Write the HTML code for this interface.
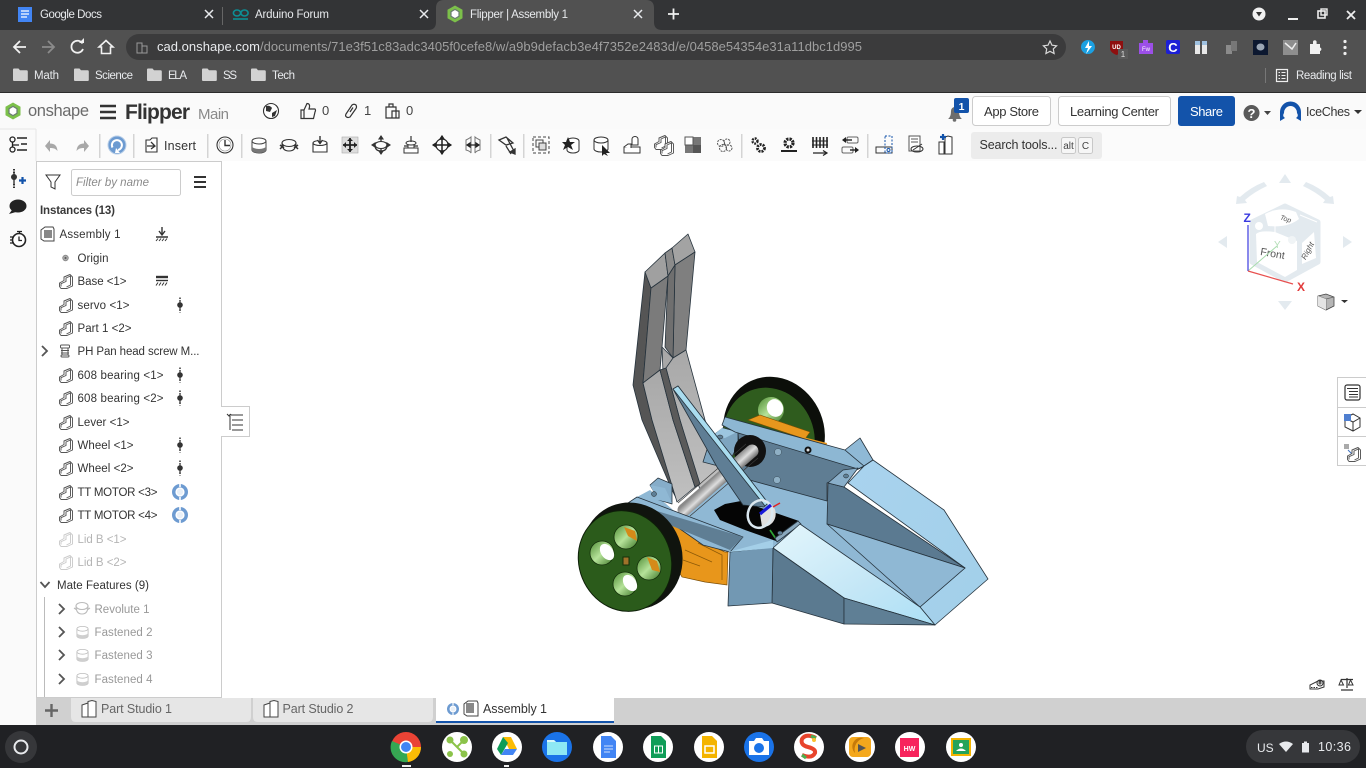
<!DOCTYPE html>
<html lang="en"><head><meta charset="utf-8"><title>Flipper | Assembly 1</title>
<style>
html,body{margin:0;padding:0;width:1366px;height:768px;overflow:hidden;background:#fff}
svg{display:block;font-family:"Liberation Sans",sans-serif}
.tab{font-size:11.5px;fill:#e8eaed}.bm{font-size:11.5px;fill:#e8eaed}
.tr{font-size:11.5px;fill:#333}.dim{font-size:11.5px;fill:#b5b5b5}.mf{font-size:11.5px;fill:#999}
.ic{fill:none;stroke:#333;stroke-width:1.1}.ed{stroke:#26333d;stroke-width:.8;stroke-linejoin:round}
.bt{font-size:13px;fill:#333;text-anchor:middle}
</style></head><body>
<svg width="1366" height="768" viewBox="0 0 1366 768" xmlns="http://www.w3.org/2000/svg">
<defs>
<linearGradient id="shaft" gradientUnits="userSpaceOnUse" x1="715.6" y1="475.2" x2="724.4" y2="484.8"><stop offset="0" stop-color="#8a8a8a"/><stop offset=".5" stop-color="#dedede"/><stop offset="1" stop-color="#707070"/></linearGradient>
<linearGradient id="wt" x1="0" y1="0" x2="1" y2="1"><stop offset="0" stop-color="#e3f6fc"/><stop offset=".6" stop-color="#c3e6f6"/><stop offset="1" stop-color="#ace0f6"/></linearGradient>
<linearGradient id="wr" x1="0" y1="0" x2="1" y2=".6"><stop offset="0" stop-color="#a9d3ee"/><stop offset="1" stop-color="#a3d0ea"/></linearGradient>
<linearGradient id="fl" x1="0" y1="0" x2="0" y2="1"><stop offset="0" stop-color="#a8a8a8"/><stop offset="1" stop-color="#c0c0c0"/></linearGradient>
<linearGradient id="hole" x1="0" y1="0" x2="1" y2="1"><stop offset="0" stop-color="#4c8a32"/><stop offset=".5" stop-color="#b6e39a"/><stop offset="1" stop-color="#3c7526"/></linearGradient>
<g id="part"><path d="M.5 9L5 6.500V3L11 .5L13.500 3V12L8 14.500H2L.5 12.500Z" fill="#fff" stroke="#555" stroke-width=".95" stroke-linejoin="round"/><path d="M2 12.500V9.700L7 7.500V4L11.500 2V11L7.500 13" fill="none" stroke="#555" stroke-width=".95"/></g>
<g id="partd" opacity=".3"><use href="#part"/></g>
<g id="dof"><path d="M0 -7.500V-4.500M0 4.500V7.500" stroke="#333" stroke-width="1.500" stroke-dasharray="1.500 1"/><path d="M0 -5V5" stroke="#333" stroke-width="1.200"/><circle r="2.800" fill="#333"/></g>
<g id="rev"><circle r="8" fill="#6d9bd1"/><circle r="4.600" fill="#fff"/><circle r="3.200" fill="#6d9bd1" opacity=".15"/><path d="M0 -8V-5M0 5V8" stroke="#fff" stroke-width="1.600"/></g>
<path id="chev" d="M-3 -5L2 0L-3 5" fill="none" stroke="#555" stroke-width="1.800"/>
<g id="cyl"><path d="M-7 -4V5A7 3 0 0 0 7 5V-4" fill="#fff" stroke="#444" stroke-width="1"/><path d="M-7 1A7 3 0 0 0 7 1V5A7 3 0 0 1 -7 5Z" fill="#777"/><ellipse cy="-4" rx="7" ry="3" fill="#fff" stroke="#444"/></g>
<g id="folder"><path d="M0 1.500A1 1 0 0 1 1 .5H5.500L7 2.200H13.600A1.200 1.200 0 0 1 14.800 3.400V12A1 1 0 0 1 13.800 13H1A1 1 0 0 1 0 12Z" fill="#d2d2d2"/></g>
<g id="x"><path d="M-4 -4L4 4M4 -4L-4 4" stroke="#e8eaed" stroke-width="1.500"/></g>
<g id="sdisc"><circle r="15" fill="#fff"/></g>
<g id="hex"><path d="M0 -8.500L7.500 -4.200V4.200L0 8.500L-7.500 4.200V-4.200Z" fill="#7cc04a"/><path d="M0 -4.600L4 -2.300V2.300L0 4.600L-4 2.300V-2.300Z" fill="#fff" stroke="#6a7c72" stroke-width="1.200"/></g>
</defs>

<!-- browser chrome -->
<rect width="1366" height="31" fill="#333436"/>
<rect y="30" width="1366" height="62" fill="#515151"/>
<rect y="92" width="1366" height="1" fill="#2b2b2b"/>
<path d="M428 30Q436 30 436 22V8Q436 0 444 0H646Q654 0 654 8V22Q654 30 662 30Z" fill="#515151"/>
<path d="M18 7H32V22H18Z" fill="#4285f4"/><path d="M21 11H29M21 14H29M21 17H27" stroke="#fff" stroke-width="1.200"/>
<text class="tab" x="40" y="18" textLength="62">Google Docs</text><use href="#x" x="209" y="14"/>
<rect x="222" y="7" width="1" height="18" fill="#666"/>
<g fill="none" stroke="#0d8e94" stroke-width="1.600"><ellipse cx="237" cy="13" rx="3.600" ry="3"/><ellipse cx="244.500" cy="13" rx="3.600" ry="3"/></g><path d="M233 19H248" stroke="#0d8e94" stroke-width="1.600"/>
<text class="tab" x="255" y="18" textLength="74">Arduino Forum</text><use href="#x" x="424" y="14"/>
<use href="#hex" x="455" y="14"/>
<text class="tab" x="470" y="18" textLength="98">Flipper | Assembly 1</text><use href="#x" x="638" y="14"/>
<path d="M668 14H679M673.500 8.500V19.500" stroke="#f1f1f1" stroke-width="1.800"/>
<circle cx="1259" cy="14" r="6.500" fill="#f1f1f1"/><path d="M1256 12H1262L1259 16.500Z" fill="#333"/>
<path d="M1288 19H1298" stroke="#eee" stroke-width="2"/>
<rect x="1318" y="11" width="7" height="7" fill="none" stroke="#eee" stroke-width="1.600"/><rect x="1321" y="9" width="6" height="6" fill="none" stroke="#eee" stroke-width="1.400"/>
<path d="M1347 11L1355 19M1355 11L1347 19" stroke="#eee" stroke-width="1.800"/>
<!-- nav -->
<path d="M26 47H15M20 41L14 47L20 53" fill="none" stroke="#f1f1f1" stroke-width="1.800"/>
<path d="M42 47H53M48 41L54 47L48 53" fill="none" stroke="#8b8b8b" stroke-width="1.800"/>
<path d="M82.500 43.500A6 6 0 1 0 83 49" fill="none" stroke="#f1f1f1" stroke-width="1.800"/><path d="M79 43H84V38Z" fill="#f1f1f1"/>
<path d="M99 47L106 40.500L113 47H110.500V53.500H101.500V47Z" fill="none" stroke="#f1f1f1" stroke-width="1.600"/>
<rect x="126" y="34" width="940" height="26" rx="13" fill="#3b3b3c"/>
<path d="M137 43H142V53H137ZM142 46H147V53H142Z" fill="none" stroke="#9a9a9a" stroke-width="1"/>
<text x="157" y="51" font-size="13" fill="#9f9f9f" textLength="705"><tspan fill="#e8eaed">cad.onshape.com</tspan>/documents/71e3f51c83adc3405f0cefe8/w/a9b9defacb3e4f7352e2483d/e/0458e54354e31a11dbc1d995</text>
<path d="M1050 41L1052 45.200L1056.600 45.800L1053.300 49L1054.100 53.500L1050 51.300L1045.900 53.500L1046.700 49L1043.400 45.800L1048 45.200Z" fill="none" stroke="#d8d8d8" stroke-width="1.200"/>
<!-- extensions -->
<path d="M1088 40A7 7 0 1 1 1087.900 40Z" fill="#1ba0e2"/><path d="M1089 41L1085 48H1088L1086 54L1092 46H1089Z" fill="#fff"/>
<path d="M1110 41H1123V49Q1122 53 1116.500 55Q1111 53 1110 49Z" fill="#8e0f0f"/><text x="1116.500" y="49" font-size="6" font-weight="bold" fill="#fff" text-anchor="middle">UD</text>
<rect x="1118" y="49" width="10" height="10" fill="#5a5a5a"/><text x="1123" y="57" font-size="8" fill="#ddd" text-anchor="middle">1</text>
<path d="M1139 43H1143V40H1148V43H1153V54H1139Z" fill="#9c4fe8"/><text x="1146" y="51" font-size="6" fill="#fff" text-anchor="middle">Fw</text>
<rect x="1166" y="40" width="14" height="14" rx="2" fill="#1c1fd6"/><text x="1173" y="52" font-size="13" font-weight="bold" fill="#fff" text-anchor="middle">C</text>
<path d="M1195 41H1200V54H1195ZM1202 41H1207V54H1202Z" fill="#e8e8e8"/><path d="M1195 41H1200V45H1195ZM1202 41H1207V45H1202Z" fill="#9fc1e0"/>
<path d="M1226 45H1232V54H1226Z" fill="#8b8b8b"/><path d="M1231 41H1237V51H1231Z" fill="#777"/>
<rect x="1253" y="40" width="15" height="15" fill="#0c1830"/><ellipse cx="1260.500" cy="47" rx="4" ry="3.500" fill="#9aa6b5"/>
<rect x="1283" y="40" width="15" height="15" fill="#8e8e8e"/><path d="M1285 43L1292 49L1296 43" fill="none" stroke="#eee" stroke-width="1.500"/>
<path d="M1310 44H1313V42A1.800 1.800 0 0 1 1316.600 42V44H1320V47.500A1.800 1.800 0 0 1 1320 51V54H1310Z" fill="#f1f1f1"/>
<circle cx="1345" cy="41.500" r="1.600" fill="#eee"/><circle cx="1345" cy="47.500" r="1.600" fill="#eee"/><circle cx="1345" cy="53.500" r="1.600" fill="#eee"/>
<!-- bookmarks -->
<use href="#folder" x="13" y="68"/><text class="bm" x="34" y="79" textLength="25">Math</text>
<use href="#folder" x="74" y="68"/><text class="bm" x="95" y="79" textLength="38">Science</text>
<use href="#folder" x="147" y="68"/><text class="bm" x="168" y="79" textLength="19">ELA</text>
<use href="#folder" x="202" y="68"/><text class="bm" x="223" y="79" textLength="14">SS</text>
<use href="#folder" x="251" y="68"/><text class="bm" x="272" y="79" textLength="23">Tech</text>
<rect x="1265" y="68" width="1" height="15" fill="#777"/>
<rect x="1276.500" y="69.500" width="11" height="12" fill="none" stroke="#eee" stroke-width="1.200"/><path d="M1278.500 72.500H1280M1281.500 72.500H1285.500M1278.500 75.500H1280M1281.500 75.500H1285.500M1278.500 78.500H1280M1281.500 78.500H1285.500" stroke="#eee"/>
<text class="bm" x="1296" y="79" textLength="56">Reading list</text>

<!-- onshape header -->
<rect y="93" width="1366" height="68" fill="#fafafa"/>
<rect y="129" width="1366" height="32" fill="#fbfbfb"/>
<use href="#hex" x="13" y="111"/>
<text x="28" y="116" font-size="16.500" fill="#6b6b6b" textLength="61">onshape</text>
<path d="M100 106H116M100 112H116M100 118H116" stroke="#333" stroke-width="2.600"/>
<text x="125" y="119" font-size="21" font-weight="bold" fill="#333" textLength="65">Flipper</text>
<text x="198" y="119" font-size="15" fill="#8a8a8a" textLength="31">Main</text>
<circle cx="271" cy="111" r="7.500" fill="#fff" stroke="#333" stroke-width="1.100"/><path d="M266 106Q270 105 272 108L270 112L266 111ZM272 113L277 110L275 116L272 117Z" fill="#333"/>
<path d="M301 110H304V118.500H301ZM304 110L307 103.500Q310 103.500 309.500 107L309 109H315Q316 110 315 112L313.500 118.500H304" fill="none" stroke="#333" stroke-width="1.200"/>
<text x="322" y="115" font-size="13" fill="#444">0</text>
<path d="M346 114L352 105Q354 103.500 356 105Q357 107 356 108.500L350 117Q348 118 346.500 117Q345 116 346 114ZM350 112L353 107.500" fill="none" stroke="#333" stroke-width="1.200"/>
<text x="364" y="115" font-size="13" fill="#444">1</text>
<path d="M386 107H396V118H386ZM389 107V104H393V107M392 111V118H399V111Z" fill="none" stroke="#333" stroke-width="1.200"/>
<text x="406" y="115" font-size="13" fill="#444">0</text>
<path d="M948 119Q951 117 951 111A4 4 0 0 1 959 111Q959 117 962 119Z" fill="#6d6d6d"/><circle cx="954.500" cy="120" r="1.800" fill="#6d6d6d"/>
<rect x="954" y="98" width="15" height="15" rx="2" fill="#1353aa"/><text x="961.500" y="110" font-size="10.500" font-weight="bold" fill="#fff" text-anchor="middle">1</text>
<rect x="972.500" y="96.500" width="78" height="29" rx="3" fill="#fff" stroke="#ccc"/><text class="bt" x="1011.500" y="116" textLength="55">App Store</text>
<rect x="1058.500" y="96.500" width="112" height="29" rx="3" fill="#fff" stroke="#ccc"/><text class="bt" x="1114.500" y="116" textLength="89">Learning Center</text>
<rect x="1178" y="96" width="57" height="30" rx="3" fill="#1353aa"/><text x="1206.500" y="116" font-size="13" fill="#fff" text-anchor="middle" textLength="33">Share</text>
<circle cx="1251.500" cy="113" r="8" fill="#5a5a5a"/><text x="1251.500" y="118" font-size="13" font-weight="bold" fill="#fff" text-anchor="middle">?</text>
<path d="M1264 111H1271L1267.500 115Z" fill="#444"/>
<path d="M1280 121V112A10.500 10.500 0 0 1 1301 112V121L1296 118Q1299 116 1297 113A6.500 7 0 0 0 1284 113Q1282 116 1285 118Z" fill="#1353aa"/>
<text x="1306" y="116" font-size="12.500" fill="#333" textLength="44">IceChes</text>
<path d="M1354 110H1362L1358 114Z" fill="#333"/>

<!-- toolbar -->
<g fill="#d4d4d4"><rect x="99" y="134" width="1.500" height="24"/><rect x="133" y="134" width="1.500" height="24"/><rect x="207" y="134" width="1.500" height="24"/><rect x="241" y="134" width="1.500" height="24"/><rect x="490" y="134" width="1.500" height="24"/><rect x="523" y="134" width="1.500" height="24"/><rect x="741" y="134" width="1.500" height="24"/><rect x="867" y="134" width="1.500" height="24"/></g>
<path d="M45 146L50 140V143.500Q57 143.500 57.500 151Q55 147.500 50 148V152Z" fill="#a8a8a8"/>
<path d="M89 146L84 140V143.500Q77 143.500 76.500 151Q79 147.500 84 148V152Z" fill="#a8a8a8"/>
<circle cx="117" cy="145" r="9" fill="#6d9bd1" stroke="#b9cfe8"/><path d="M112.500 147.500A5 5 0 1 1 118 150" fill="none" stroke="#fff" stroke-width="2"/><path d="M116 148L120 153L115 153Z" fill="#fff"/>
<path d="M146 140H150L152 138H157V152H146Z" fill="#fff" stroke="#333" stroke-width="1.100"/><path d="M151 142L155 146L151 149M147 146H155" fill="none" stroke="#333" stroke-width="1.300"/>
<text x="164" y="150" font-size="12.500" fill="#333" textLength="32">Insert</text>
<circle cx="225" cy="145" r="8" fill="#fff" stroke="#333" stroke-width="1.100"/><circle cx="225" cy="145" r="6" fill="none" stroke="#888" stroke-width=".6"/><path d="M225 140V145.500H230" fill="none" stroke="#333" stroke-width="1.400"/>
<use href="#cyl" x="259" y="145"/>
<g transform="translate(289 145)" fill="none" stroke="#333" stroke-width="1.100"><ellipse cy="-2" rx="7" ry="3.500"/><path d="M-7 -2Q-7 6 0 6Q7 6 7 -2"/><path d="M-9 0L-5 3M-9 4L-5 0M9 0L5 3M9 4L5 0" stroke-width="1.500"/></g>
<g transform="translate(320 146)" fill="#fff" stroke="#333" stroke-width="1.100"><path d="M-7 -3V6H7V-3"/><ellipse cy="-3" rx="7" ry="2.500"/><path d="M0 -10V-2M-2.500 -6L0 -2.500L2.500 -6" stroke-width="1.400"/></g>
<g transform="translate(350 145)"><rect x="-8" y="-8" width="16" height="16" fill="#ddd" stroke="#aaa" stroke-width=".6"/><path d="M-7 0H7M0 -7V7" stroke="#222" stroke-width="1.800"/><path d="M-7 0L-4 -3V3ZM7 0L4 -3V3ZM0 -7L-3 -4H3ZM0 7L-3 4H3Z" fill="#222"/></g>
<g transform="translate(381 145)" fill="none" stroke="#333" stroke-width="1.100"><ellipse rx="6" ry="3.500"/><path d="M-6 0Q-6 6 0 6Q6 6 6 0M0 -9V-3M0 3V9" stroke-width="1.300"/><path d="M-9 0L-6 -2V2ZM9 0L6 -2V2ZM0 -9L-2 -6H2ZM0 9L-2 6H2Z" fill="#333"/></g>
<g transform="translate(411 145)" fill="#fff" stroke="#333" stroke-width="1"><path d="M-7 8V3H7V8ZM-3 3V-2H3V3"/><ellipse cy="-2" rx="5" ry="2"/><path d="M0 -9V-3M-7 1H-3M7 1H3" stroke-width="1.200"/></g>
<g transform="translate(442 145)" fill="none" stroke="#222" stroke-width="1.200"><circle r="6"/><path d="M-9 0H9M0 -9V9" stroke-width="1.500"/><path d="M-9 0L-6 -2V2ZM9 0L6 -2V2ZM0 -9L-2 -6H2ZM0 9L-2 6H2Z" fill="#222"/></g>
<g transform="translate(473 145)" fill="none" stroke="#777" stroke-width="1"><path d="M-7 -5Q-3 -7 -2 -8V8Q-3 6 -7 5ZM7 -5Q3 -7 2 -8V8Q3 6 7 5Z"/><path d="M-6 0H6M-6 0L-3 -2V2ZM6 0L3 -2V2Z" stroke="#222" stroke-width="1.200"/></g>
<g transform="translate(507 145)" stroke="#333" stroke-width="1.300" fill="none"><path d="M-8 -5L-1 -8L6 -2L-1 0ZM-1 1L4 9M0 -7L8 8"/><path d="M8 9L3 7L8 4Z" fill="#333"/></g>
<g transform="translate(541 145)" fill="none" stroke="#444"><rect x="-8" y="-8" width="16" height="16" stroke-dasharray="3 2"/><rect x="-5" y="-5" width="7" height="7"/><rect x="-2" y="-2" width="7" height="7" fill="#ddd"/></g>
<g transform="translate(571 145)"><ellipse cx="2" cy="-4" rx="6" ry="3" fill="#fff" stroke="#333"/><path d="M-4 -4V5A6 3 0 0 0 8 5V-4" fill="#fff" stroke="#333"/><path d="M-3 -8L-1 -3L4 -3L0 0L2 5L-3 2L-8 5L-6 0L-9 -3H-5Z" fill="#222"/></g>
<g transform="translate(601 145)"><path d="M-7 -5V4A7 3 0 0 0 7 4V-5" fill="#fff" stroke="#333"/><ellipse cy="-5" rx="7" ry="3" fill="#fff" stroke="#333"/><path d="M1 0L9 8L5 8L7 11L3 9L1 11Z" fill="#222"/></g>
<g transform="translate(632 145)" fill="#fff" stroke="#333"><path d="M-8 2H8V8H-8Z"/><path d="M-8 2L-4 -1H-1V3"/><ellipse cx="3" cy="-6" rx="3" ry="2.500"/><path d="M0 -6V0H6V-6"/></g>
<use href="#part" x="654" y="135"/><use href="#part" x="660" y="141"/>
<g transform="translate(693 145)"><rect x="-8" y="-8" width="16" height="16" fill="#777"/><rect x="-8" y="-8" width="8" height="8" fill="#fff" stroke="#555"/><rect x="0" y="0" width="8" height="8" fill="#555"/></g>
<g transform="translate(724 145)" fill="none" stroke="#555"><circle cx="-3" cy="-2" r="3.500" stroke-dasharray="2 1"/><circle cx="3" cy="-3" r="3" stroke-dasharray="2 1"/><circle cx="-1" cy="3" r="3.500" stroke-dasharray="2 1"/><circle cx="5" cy="3" r="3" stroke-dasharray="2 1"/></g>
<g transform="translate(758 145)" fill="none" stroke="#222"><circle cx="-3" cy="-4" r="2.500" stroke-width="2.400" stroke-dasharray="1.800 1"/><circle cx="3" cy="3" r="3.500" stroke-width="2.800" stroke-dasharray="2 1"/></g>
<g transform="translate(789 144)" fill="none" stroke="#222"><circle cy="-1" r="4" stroke-width="3.200" stroke-dasharray="2.200 1"/><path d="M-8 7H8" stroke-width="2"/></g>
<g transform="translate(820 145)" stroke="#222" fill="none"><path d="M-7 -8V3M-3.500 -8V3M0 -8V3M3.500 -8V3M7 -8V3" stroke-width="1.600"/><path d="M-8 -4H8M-8 0H8"/><path d="M-7 8H6M3 5.500L7 8L3 10.500" stroke-width="1.200"/></g>
<g transform="translate(850 145)" fill="none" stroke="#666"><rect x="-3" y="-8" width="11" height="6" rx="1.500"/><rect x="-8" y="2" width="11" height="6" rx="1.500"/><path d="M2 -5H-7" stroke="#222" stroke-width="1.400"/><path d="M-8 -5L-4 -8V-2Z" fill="#222" stroke="none"/><path d="M0 5H8" stroke="#222" stroke-width="1.400"/><path d="M9 5L5 2V8Z" fill="#222" stroke="none"/></g>
<g transform="translate(884 145)" fill="none"><rect x="-8" y="2" width="16" height="6" stroke="#333"/><rect x="1" y="-9" width="7" height="17" stroke="#1353aa" stroke-dasharray="2 1.500"/><circle cx="4.500" cy="5" r="1.500" stroke="#1353aa"/></g>
<g transform="translate(915 145)" fill="none" stroke="#555"><rect x="-6" y="-9" width="11" height="15" fill="#fff"/><path d="M-4 -6H3M-4 -3H3"/><path d="M-2 5L7 -1" stroke="#333"/><ellipse cx="2" cy="4" rx="6" ry="3" stroke="#333"/></g>
<g transform="translate(945 145)"><path d="M-6 -3H-1V9H-6ZM0 -8L3 -9L7 -8V9H0Z" fill="#fff" stroke="#333"/><path d="M-5 -8H1M-2 -11V-5" stroke="#1353aa" stroke-width="2.200"/></g>
<rect x="971" y="132" width="131" height="27" rx="3" fill="#ececec"/>
<text x="979.500" y="149" font-size="12.500" fill="#333" textLength="78">Search tools...</text>
<rect x="1061.500" y="137.500" width="14" height="16" rx="2" fill="#f6f6f6" stroke="#c8c8c8"/><text x="1068.500" y="149" font-size="10" fill="#444" text-anchor="middle">alt</text>
<rect x="1078.500" y="137.500" width="14" height="16" rx="2" fill="#f6f6f6" stroke="#c8c8c8"/><text x="1085.500" y="149" font-size="10" fill="#444" text-anchor="middle">C</text>

<!-- rail -->
<rect y="129" width="36" height="569" fill="#fafafa"/>
<path d="M36 129V161M0 129H36" stroke="#e6e6e6" fill="none"/>
<g fill="none" stroke="#222" stroke-width="1.300"><circle cx="12.500" cy="139.500" r="2.500"/><circle cx="12.500" cy="149.500" r="2.500"/><path d="M12.500 142V147M12.500 145H19"/><path d="M17 138H27M21 144H27M17 150H27" stroke-width="1.600"/></g>
<path d="M14 169V173M14 184V188" stroke="#333" stroke-width="2" stroke-dasharray="1.500 1"/><circle cx="14" cy="177" r="3" fill="#333"/><path d="M14 173V184" stroke="#333" stroke-width="1.400"/>
<path d="M19 180.500H26M22.500 177V184" stroke="#1353aa" stroke-width="2.200"/>
<ellipse cx="18" cy="206" rx="8.500" ry="6.500" fill="#222"/><path d="M12 210L9 214L16 212Z" fill="#222"/>
<circle cx="19" cy="240" r="6.500" fill="#fff" stroke="#222" stroke-width="1.600"/><path d="M19 236.500V240.500H22M17 231.500H22M19.500 231.500V233.500M10 237H14M10 240H13M10 243H14" fill="none" stroke="#222" stroke-width="1.300"/>
<g transform="translate(18 711)"><path d="M-8 -5H4V2H-8Z" fill="#333"/><circle cx="1" cy="0" r="4" fill="#fff" stroke="#222" stroke-width="1.400"/><path d="M4 3L8 7" stroke="#222" stroke-width="1.800"/></g>

<!-- tree panel -->
<rect x="36.500" y="161.500" width="185" height="536" fill="#fff" stroke="#ccc"/>
<path d="M46 175H60L55 182V189L51 187V182Z" fill="none" stroke="#333" stroke-width="1"/>
<rect x="71.500" y="169.500" width="109" height="26" rx="2" fill="#fff" stroke="#ccc"/>
<text x="76" y="186" font-size="11.500" font-style="italic" fill="#8a8a8a" textLength="73">Filter by name</text>
<path d="M194 177H206M194 182H206M194 187H206" stroke="#333" stroke-width="2"/>
<text x="40" y="214" font-size="11.500" font-weight="bold" fill="#3a3a3a" textLength="75">Instances (13)</text>
<g transform="translate(41 227)"><path d="M0 3L4 0H12L13 2V14H3L0 12Z" fill="#fff" stroke="#444"/><rect x="3" y="3" width="8" height="8" fill="#888"/></g>
<text class="tr" x="59.500" y="238" textLength="61">Assembly 1</text>
<g transform="translate(162 234)"><path d="M0 -7V0M-3 -3L0 1L3 -3" stroke="#333" fill="none" stroke-width="1.400"/><path d="M-6 3H6" stroke="#333" stroke-width="1.500"/><path d="M-6 7L-4 4.500M-3 7L-1 4.500M0 7L2 4.500M3 7L5 4.500" stroke="#333"/></g>
<circle cx="65.500" cy="258" r="2.800" fill="#aaa" stroke="#888" stroke-width=".8"/><circle cx="65.500" cy="258" r="1" fill="#555"/>
<text class="tr" x="77.500" y="262" textLength="31">Origin</text>
<use href="#part" x="59" y="274"/><text class="tr" x="77.500" y="285" textLength="49">Base &lt;1&gt;</text>
<g transform="translate(162 281)"><path d="M-6 -4H6" stroke="#333" stroke-width="2.400"/><path d="M-6 -.5H6" stroke="#333" stroke-width="1.400"/><path d="M-6 4.500L-4 1.500M-3 4.500L-1 1.500M0 4.500L2 1.500M3 4.500L5 1.500" stroke="#333"/></g>
<use href="#part" x="59" y="298"/><text class="tr" x="77.500" y="309" textLength="52">servo &lt;1&gt;</text><use href="#dof" x="180" y="305"/>
<use href="#part" x="59" y="321"/><text class="tr" x="77.500" y="332" textLength="54">Part 1 &lt;2&gt;</text>
<use href="#chev" x="45" y="351"/>
<g transform="translate(65 351)" fill="none" stroke="#555"><rect x="-4.500" y="-6" width="9" height="3" rx="1"/><path d="M-3 -3V4H3V-3M-4 -.5H4M-4 2H4"/><rect x="-4" y="4" width="8" height="2" rx="1"/></g>
<text class="tr" x="77.500" y="355" textLength="122">PH Pan head screw M...</text>
<use href="#part" x="59" y="368"/><text class="tr" x="77.500" y="379" textLength="86">608 bearing &lt;1&gt;</text><use href="#dof" x="180" y="375"/>
<use href="#part" x="59" y="391"/><text class="tr" x="77.500" y="402" textLength="86">608 bearing &lt;2&gt;</text><use href="#dof" x="180" y="398"/>
<use href="#part" x="59" y="415"/><text class="tr" x="77.500" y="426" textLength="52">Lever &lt;1&gt;</text>
<use href="#part" x="59" y="438"/><text class="tr" x="77.500" y="449" textLength="56">Wheel &lt;1&gt;</text><use href="#dof" x="180" y="445"/>
<use href="#part" x="59" y="461"/><text class="tr" x="77.500" y="472" textLength="56">Wheel &lt;2&gt;</text><use href="#dof" x="180" y="468"/>
<use href="#part" x="59" y="485"/><text class="tr" x="77.500" y="496" textLength="80">TT MOTOR &lt;3&gt;</text><use href="#rev" x="180" y="492"/>
<use href="#part" x="59" y="508"/><text class="tr" x="77.500" y="519" textLength="80">TT MOTOR &lt;4&gt;</text><use href="#rev" x="180" y="515"/>
<use href="#partd" x="59" y="532"/><text class="dim" x="77.500" y="543" textLength="49">Lid B &lt;1&gt;</text>
<use href="#partd" x="59" y="555"/><text class="dim" x="77.500" y="566" textLength="49">Lid B &lt;2&gt;</text>
<path d="M40.500 582L45 587L49.500 582" fill="none" stroke="#555" stroke-width="1.800"/>
<text class="tr" x="57" y="589" textLength="92">Mate Features (9)</text>
<rect x="44" y="597" width="1" height="100" fill="#bbb"/>
<use href="#chev" x="62" y="609"/>
<g transform="translate(82 608)" fill="none" stroke="#bbb" stroke-width="1.100"><ellipse cy="-2" rx="6" ry="3.500"/><path d="M-6 -2Q-6 6 0 6Q6 6 6 -2M-8 0L-5 2M8 0L5 2"/></g>
<text class="mf" x="94.500" y="613" textLength="55">Revolute 1</text>
<use href="#chev" x="62" y="632"/><g opacity=".35" transform="translate(82.500 632) scale(.8)"><use href="#cyl"/></g><text class="mf" x="94.500" y="636" textLength="58">Fastened 2</text>
<use href="#chev" x="62" y="655"/><g opacity=".35" transform="translate(82.500 655) scale(.8)"><use href="#cyl"/></g><text class="mf" x="94.500" y="659" textLength="58">Fastened 3</text>
<use href="#chev" x="62" y="679"/><g opacity=".35" transform="translate(82.500 679) scale(.8)"><use href="#cyl"/></g><text class="mf" x="94.500" y="683" textLength="58">Fastened 4</text>
<!-- flyout -->
<path d="M221 406.500H249.500V436.500H221" fill="#fff" stroke="#ccc"/>
<rect x="221" y="407" width="2" height="29" fill="#fff"/>
<path d="M229 415H243M232 420H243M232 425H243M232 430H243M227 414L229 416L231 414M230 416V430" fill="none" stroke="#333"/>

<!-- MODEL -->
<!-- rear wheel -->
<ellipse cx="774" cy="432" rx="50" ry="56" fill="#0c0f0a" transform="rotate(-22 774 432)"/>
<ellipse cx="769" cy="437" rx="45" ry="50" fill="#2f5c1e" transform="rotate(-22 769 437)"/>
<ellipse cx="771" cy="410" rx="13" ry="13" fill="url(#hole)"/><ellipse cx="775" cy="408" rx="8" ry="9" fill="#fff" transform="rotate(-25 775 408)"/>
<path d="M748 420L760 415L810 432L805 439Z" fill="#e8971d" stroke="#7a4d05" stroke-width=".6"/><path d="M803 437L827 443L826 448L800 440Z" fill="#e8971d"/>
<!-- flipper -->
<path d="M645 272L651 288L643 383L652 420L677 500L672 490L642 420L633 385Z" fill="#555" class="ed"/>
<path d="M651 288L668 276L662 347L660 370L643 383Z" fill="#7b7b7b" class="ed"/>
<path d="M645 272L665 253L668 276L651 288Z" fill="#a0a0a0" class="ed"/>
<path d="M665 253L672 248L675 265L668 276Z" fill="#8b8b8b" class="ed"/>
<path d="M672 248L688 234L695 252L675 265Z" fill="#a3a3a3" class="ed"/>
<path d="M675 265L695 252L686 350L673 358Z" fill="#7f7f7f" class="ed"/>
<path d="M668 276L675 265L673 358L665 347Z" fill="#6f6f6f" class="ed"/>
<path d="M662 347L673 358L672 366L663 372Z" fill="#a8a8a8" class="ed"/>
<path d="M673 358L686 350L705 420L725 475L700 490L680 420L666 368Z" fill="url(#fl)" class="ed"/>
<path d="M643 383L660 370L673 420L695 487L677 502L652 420Z" fill="url(#fl)" class="ed"/>
<path d="M660 370L666 368L680 420L700 484L695 487L673 420Z" fill="#5a5a5a" class="ed"/>
<!-- chassis base -->
<path d="M637 497L650 490L680 516L758 458L742 478L827 501L827 524L920 607L935 625L844 598L773 548L730 552Z" fill="#8fb8d4"/>
<path d="M711 437L723 428L738 432L738 445L726 468L703 462Z" fill="#7ea5c0" class="ed"/>
<path d="M711 437L722 428L737 432L725 438Z" fill="#9cc6e0"/>
<path d="M650 485L658 478L672 484L672 504L659 500Z" fill="#86adc9" class="ed"/>
<path d="M650 485L665 488L672 503L658 500Z" fill="#8fb8d4"/>
<circle cx="654" cy="494" r="2.500" fill="#5e7f96" stroke="#222" stroke-width=".5"/><ellipse cx="720" cy="437" rx="3" ry="2" fill="#5e7f96" stroke="#222" stroke-width=".5"/>
<!-- back wall -->
<path d="M738 433L863 467L827 483V501L742 478Z" fill="#5f7d93" class="ed"/>
<path d="M725 417L845 450L864 466L858 469L735 432L722 425Z" fill="#8db7d3" class="ed"/>
<circle cx="778" cy="452" r="3.500" fill="#8fb0c5" stroke="#3c4f5c" stroke-width=".5"/><circle cx="777" cy="480" r="3.500" fill="#8fb0c5" stroke="#3c4f5c" stroke-width=".5"/>
<circle cx="808" cy="450" r="3.500" fill="#111"/><circle cx="808" cy="450" r="1.500" fill="#ddd"/>
<ellipse cx="750" cy="451" rx="16" ry="16" fill="#111"/>
<!-- shaft -->
<path d="M684 510L752 451" stroke="url(#shaft)" stroke-width="13" stroke-linecap="round" fill="none"/>
<path d="M678 503L746 444M690 516L758 458" stroke="#3a3a3a" stroke-width=".7"/>
<!-- black servo -->
<path d="M714 510L725 504L741 501L799 521L776 541L745 530L720 520Z" fill="#050505"/>
<!-- lever -->
<path d="M673 389L678 386L768 503L764 507L743 505L717 467Z" fill="#5f7e95" class="ed"/>
<path d="M673 389L678 386L768 503L765 506Z" fill="#a9dcef" class="ed"/>
<!-- mate connector -->
<path d="M760 514L771 504A13 13 0 0 1 762 527Z" fill="#dfdfdf"/>
<ellipse cx="760" cy="514" rx="12" ry="14" fill="none" stroke="#dbe8f0" stroke-width="2.500" transform="rotate(20 760 514)"/>
<path d="M760 514L771 505" stroke="#1717d8" stroke-width="3.200"/><path d="M773 507L780 503" stroke="#e02323" stroke-width="1.500"/><path d="M770 530L776 539" stroke="#2fa335" stroke-width="1.700"/>
<!-- bracket near nose -->
<path d="M775 538L798 521L801 524L777 542Z" fill="#89a8bd" class="ed"/><ellipse cx="780" cy="533" rx="2.500" ry="2" fill="#5e7f96" stroke="#222" stroke-width=".5"/>
<!-- right wedge -->
<path d="M845 450L860 438L873 460L864 466Z" fill="#8fb9d6" class="ed"/>
<path d="M848 483L864 466L873 460L944 510L988 579L935 625L920 607L965 568Z" fill="url(#wr)" class="ed"/>
<path d="M828 483L844 487L965 568L827 524Z" fill="#5b7a91" class="ed"/>
<path d="M828 483L843 470L858 468L844 487Z" fill="#8aafca" class="ed"/><ellipse cx="846" cy="476" rx="2.500" ry="2" fill="#5e7f96" stroke="#222" stroke-width=".5"/>
<path d="M827 524L965 568L920 607Z" fill="#8fb8d4" class="ed"/>
<!-- front left wedge -->
<path d="M773 548L800 524L920 607L935 625L844 598Z" fill="url(#wt)" class="ed"/>
<path d="M773 548L844 598V624L772 603Z" fill="#5b7a90" class="ed"/>
<path d="M844 598L935 625L844 624Z" fill="#5f7f95" class="ed"/>
<!-- motor -->
<path d="M665 523L690 530L694 538L725 552L728 552L727 585L705 582L682 577L672 560Z" fill="#e8961b" stroke="#7a4d05" stroke-width=".7"/>
<path d="M698 543L722 555L722 580M685 550L712 562M683 560L700 566" fill="none" stroke="#8e5a08" stroke-width=".8"/>
<!-- front panel & plate -->
<path d="M628 503L637 497L743 537L730 552L703 545L660 515Z" fill="#8fb8d4" class="ed"/>
<path d="M647 508L743 537L730 550L665 523Z" fill="#5f7e94"/>
<path d="M730 552L773 547L772 603L728 606Z" fill="#7298b3" class="ed"/>
<path d="M728 552L773 540L773 548L730 552Z" fill="#a4cfe8"/>
<!-- front wheel -->
<ellipse cx="632" cy="556" rx="50" ry="54" fill="#10140e" transform="rotate(-22 632 556)"/>
<ellipse cx="625" cy="561" rx="46" ry="51" fill="#2b5b1b" stroke="#0d1f08" transform="rotate(-22 625 561)"/>
<g stroke="#14300a" stroke-width=".8">
<ellipse cx="602" cy="553" rx="12" ry="12" fill="url(#hole)"/>
<ellipse cx="626" cy="537" rx="12" ry="12" fill="url(#hole)"/>
<ellipse cx="649" cy="568" rx="12" ry="12" fill="url(#hole)"/>
<ellipse cx="625" cy="584" rx="12" ry="12" fill="url(#hole)"/></g>
<ellipse cx="607" cy="552" rx="6" ry="9" fill="#fff" transform="rotate(-35 607 552)"/>
<path d="M624 527L635 531L637 541L628 536Z" fill="#d58a19"/>
<path d="M647 557L657 561L660 572L652 570Z" fill="#d58a19"/>
<ellipse cx="630" cy="583" rx="6" ry="9" fill="#fff" transform="rotate(-35 630 583)"/>
<rect x="623" y="557" width="6" height="8" fill="#a0722a" stroke="#14300a" stroke-width="1"/>

<!-- view cube -->
<g fill="#e3eaef">
<path d="M1285 174L1291 183H1279Z"/><path d="M1218 242L1227 236V248Z"/><path d="M1352 242L1343 236V248Z"/><path d="M1278 301H1292L1285 310Z"/>
<path d="M1236 204L1237 196L1240 197Q1251 187 1264 182L1267 186Q1254 192 1245 200L1247 203Z"/>
<path d="M1334 204L1333 196L1330 197Q1319 187 1306 182L1303 186Q1316 192 1325 200L1323 203Z"/>
</g>
<path d="M1285 206L1318 222V262L1285 280L1252 262V222Z" fill="#e3eaef" stroke="#e3eaef" stroke-width="5" stroke-linejoin="round"/>
<path d="M1265 214Q1280 206 1296 212L1299 219Q1288 228 1268 226Z" fill="#fff"/>
<path d="M1256 234Q1260 230 1275 232L1297 241L1297 270L1285 277L1257 262Z" fill="#fff"/>
<path d="M1302 243L1314 232L1316 258L1302 264Z" fill="#fff"/>
<circle cx="1259" cy="226" r="4" fill="#fff"/><circle cx="1292" cy="240" r="4" fill="#f0f4f6"/>
<path d="M1275 226V240M1300 215L1317 222" stroke="#fff"/>
<text transform="translate(1272 257) rotate(10)" font-size="10.500" fill="#555" text-anchor="middle">Front</text>
<text transform="translate(1285 221) rotate(18)" font-size="7" font-style="italic" fill="#555" text-anchor="middle">Top</text>
<text transform="translate(1310 252) rotate(-62)" font-size="8" font-style="italic" fill="#555" text-anchor="middle">Right</text>
<path d="M1248 271L1277 246" stroke="#a9dcae"/><text x="1274" y="248" font-size="10" fill="#b5dfb8">Y</text>
<path d="M1248 271V225" stroke="#3a3ae0" stroke-width="1.200"/><text x="1243.500" y="222" font-size="12" font-weight="bold" fill="#3a3ae0">Z</text>
<path d="M1248 271L1293 284" stroke="#e8504f" stroke-width="1.200"/><text x="1297" y="291" font-size="12" font-weight="bold" fill="#e23b3b">X</text>
<path d="M1318 296L1326 294L1334 297V306L1326 310L1318 306Z" fill="#b5b5b5" stroke="#444" stroke-width=".8"/><path d="M1318 296L1326 299L1334 297M1326 299V310" stroke="#666" fill="none" stroke-width=".7"/><path d="M1318 296L1326 299V310L1318 306Z" fill="#e4e4e4"/>
<path d="M1341 300H1348L1344.500 303Z" fill="#333"/>
<!-- right side panel -->
<path d="M1366 377.500H1337.500V465.500H1366M1337.500 407.500H1366M1337.500 436.500H1366" fill="#fff" stroke="#ccc"/>
<rect x="1345" y="385" width="15" height="15" rx="2" fill="#fff" stroke="#333" stroke-width="1.200"/><path d="M1347 388.500H1358M1349 391.500H1358M1349 394.500H1358M1349 397H1358" stroke="#333"/>
<path d="M1345 418L1353 414L1360 418V427L1353 431L1345 427Z M1345 418L1353 422L1360 418M1353 422V431" fill="#fff" stroke="#333"/><rect x="1344" y="414" width="7" height="7" fill="#4f7fd0"/>
<rect x="1344" y="444" width="5" height="5" fill="#aaa"/><path d="M1348 450L1352 454" stroke="#3a6fc0"/><use href="#part" x="1347" y="447"/>
<!-- bottom right -->
<g transform="translate(1317 684)" fill="none" stroke="#333"><path d="M-7 5V1L1 -3H7V3L1 5Z" fill="#fff"/><circle cx="3" cy="-1" r="3"/><circle cx="3" cy="-1" r="1"/><path d="M-6 3.500H1" stroke-dasharray="1.500 1"/></g>
<g transform="translate(1347 684)" fill="none" stroke="#333"><path d="M0 -6V4M-6 -4.500H6M-6 6H6" stroke-width="1.200"/><path d="M-6 -4L-3.500 1H-8ZM3.500 -4L6 1H1.500Z"/></g>

<!-- document tabs -->
<rect x="36" y="698" width="1330" height="27" fill="#d0d0d0"/>
<rect y="698" width="36" height="27" fill="#fafafa"/>
<path d="M45 710.500H58M51.500 704V717" stroke="#666" stroke-width="2.400"/>
<path d="M71 698H251V717Q251 722 246 722H76Q71 722 71 717Z" fill="#e6e6e6"/>
<path d="M253 698H433V717Q433 722 428 722H258Q253 722 253 717Z" fill="#e6e6e6"/>
<path d="M436 698H614V720Q614 722 612 722H438Q436 722 436 720Z" fill="#fff"/><rect x="436" y="721" width="178" height="2" fill="#1353aa"/>
<g fill="#fff" stroke="#444" stroke-width="1"><path d="M82 705L88 703V717H82Z"/><path d="M88 701.500L92 700.500L96 701.500V717H88Z"/></g>
<text x="101" y="713" font-size="12.500" fill="#666" textLength="71">Part Studio 1</text>
<g fill="#fff" stroke="#444" stroke-width="1"><path d="M264 705L270 703V717H264Z"/><path d="M270 701.500L274 700.500L278 701.500V717H270Z"/></g>
<text x="282.500" y="713" font-size="12.500" fill="#666" textLength="71">Part Studio 2</text>
<use href="#rev" transform="translate(453 709) scale(.75)"/>
<path d="M464 704L468 701H477L478 703V716H467L464 714Z" fill="#fff" stroke="#444"/><rect x="466" y="703" width="8" height="10" fill="#888"/>
<text x="483" y="713" font-size="12.500" fill="#333" textLength="64">Assembly 1</text>

<!-- shelf -->
<rect y="725" width="1366" height="43" fill="#202124"/>
<circle cx="21" cy="747" r="16" fill="#36373a"/><circle cx="21" cy="747" r="6.500" fill="none" stroke="#e8eaed" stroke-width="2"/>
<!-- chrome -->
<circle cx="406" cy="747" r="15" fill="#ea4335"/><path d="M406 747L393 755.500A15 15 0 0 0 408 762Z" fill="#34a853"/><path d="M406 747L421 747A15 15 0 0 1 408 762Z" fill="#fbbc05"/><path d="M406 747L393 755.500A15 15 0 0 1 392 741Z" fill="#34a853"/><circle cx="406" cy="747" r="6.500" fill="#fff"/><circle cx="406" cy="747" r="5" fill="#4285f4"/>
<rect x="402" y="765" width="9" height="2" fill="#eee"/>
<!-- circle -->
<use href="#sdisc" x="457" y="747"/><g stroke="#8bc34a" stroke-width="2" fill="none"><path d="M451 741L463 753M463 741L457 747"/></g><g fill="#8bc34a"><circle cx="450" cy="740" r="3.500"/><circle cx="464" cy="740" r="4"/><circle cx="450" cy="754" r="3"/><circle cx="464" cy="754" r="3.500"/></g>
<!-- drive -->
<use href="#sdisc" x="507" y="747"/><path d="M503 737H511L517 749H509Z" fill="#fbbc04"/><path d="M503 737L497 749L501 755L508 743Z" fill="#0f9d58"/><path d="M501 755L505 749H517L513 755Z" fill="#4285f4"/><rect x="504" y="765" width="5" height="2" fill="#eee"/>
<!-- files -->
<circle cx="557" cy="747" r="15" fill="#1a73e8"/><path d="M547 740H554L556 742H567V755H547Z" fill="#8ee8f4"/><path d="M547 740H554L556 742H547Z" fill="#d7f7fb"/>
<!-- docs -->
<use href="#sdisc" x="608" y="747"/><path d="M601 736H611L616 741V758H601Z" fill="#4285f4"/><path d="M604 746H613M604 749H613M604 752H610" stroke="#cfe0fb"/>
<!-- sheets -->
<use href="#sdisc" x="658" y="747"/><path d="M651 736H661L666 741V758H651Z" fill="#0f9d58"/><rect x="654.500" y="746" width="8" height="7" fill="none" stroke="#fff"/><path d="M658.500 746V753" stroke="#fff"/>
<!-- slides -->
<use href="#sdisc" x="709" y="747"/><path d="M702 736H712L717 741V758H702Z" fill="#f4b400"/><rect x="705" y="746" width="9" height="7" fill="none" stroke="#fff" stroke-width="1.500"/>
<!-- camera -->
<circle cx="759" cy="747" r="15" fill="#1a73e8"/><path d="M749 741H754L756 738H762L764 741H769V755H749Z" fill="#fff"/><circle cx="759" cy="748" r="5" fill="#1a73e8"/>
<!-- s -->
<use href="#sdisc" x="809" y="747"/><path d="M816 738Q806 733 802 739Q800 745 808 747Q816 749 815 753Q812 759 802 755" fill="none" stroke="#e8442c" stroke-width="4"/><path d="M816 738L811 736M802 755L806 758" stroke="#4caf50" stroke-width="3"/><circle cx="814" cy="740" r="2" fill="#fbc02d"/>
<!-- video app -->
<use href="#sdisc" x="860" y="747"/><rect x="849" y="737" width="22" height="20" rx="4" fill="#f4a81d"/><path d="M855 753A9 9 0 0 1 864 738A12 12 0 0 0 855 753Z" fill="#c67a0a"/><path d="M858 744L866 748L858 752Z" fill="#555"/>
<!-- hw -->
<use href="#sdisc" x="910" y="747"/><rect x="900" y="738" width="19" height="19" fill="#f7235c"/><text x="909.500" y="751" font-size="7" font-weight="bold" fill="#fff" text-anchor="middle">HW</text>
<!-- classroom -->
<use href="#sdisc" x="961" y="747"/><rect x="951" y="738" width="20" height="18" fill="#f4b400"/><rect x="953" y="740" width="16" height="14" fill="#25a35a"/><circle cx="961" cy="745" r="2" fill="#fff"/><path d="M956 751Q961 746 966 751Z" fill="#fff"/>
<!-- tray -->
<rect x="1246" y="730" width="114" height="33" rx="16.500" fill="#36373a"/>
<text x="1257" y="752" font-size="12" fill="#e8eaed">US</text>
<path d="M1279 744Q1286 739 1293 744L1286 752Z" fill="#e8eaed"/>
<path d="M1302 743H1304V741.500H1307V743H1309V752.500H1302Z" fill="#e8eaed"/>
<text x="1318" y="751" font-size="12.500" fill="#e8eaed" textLength="33">10:36</text>
</svg>
</body></html>
